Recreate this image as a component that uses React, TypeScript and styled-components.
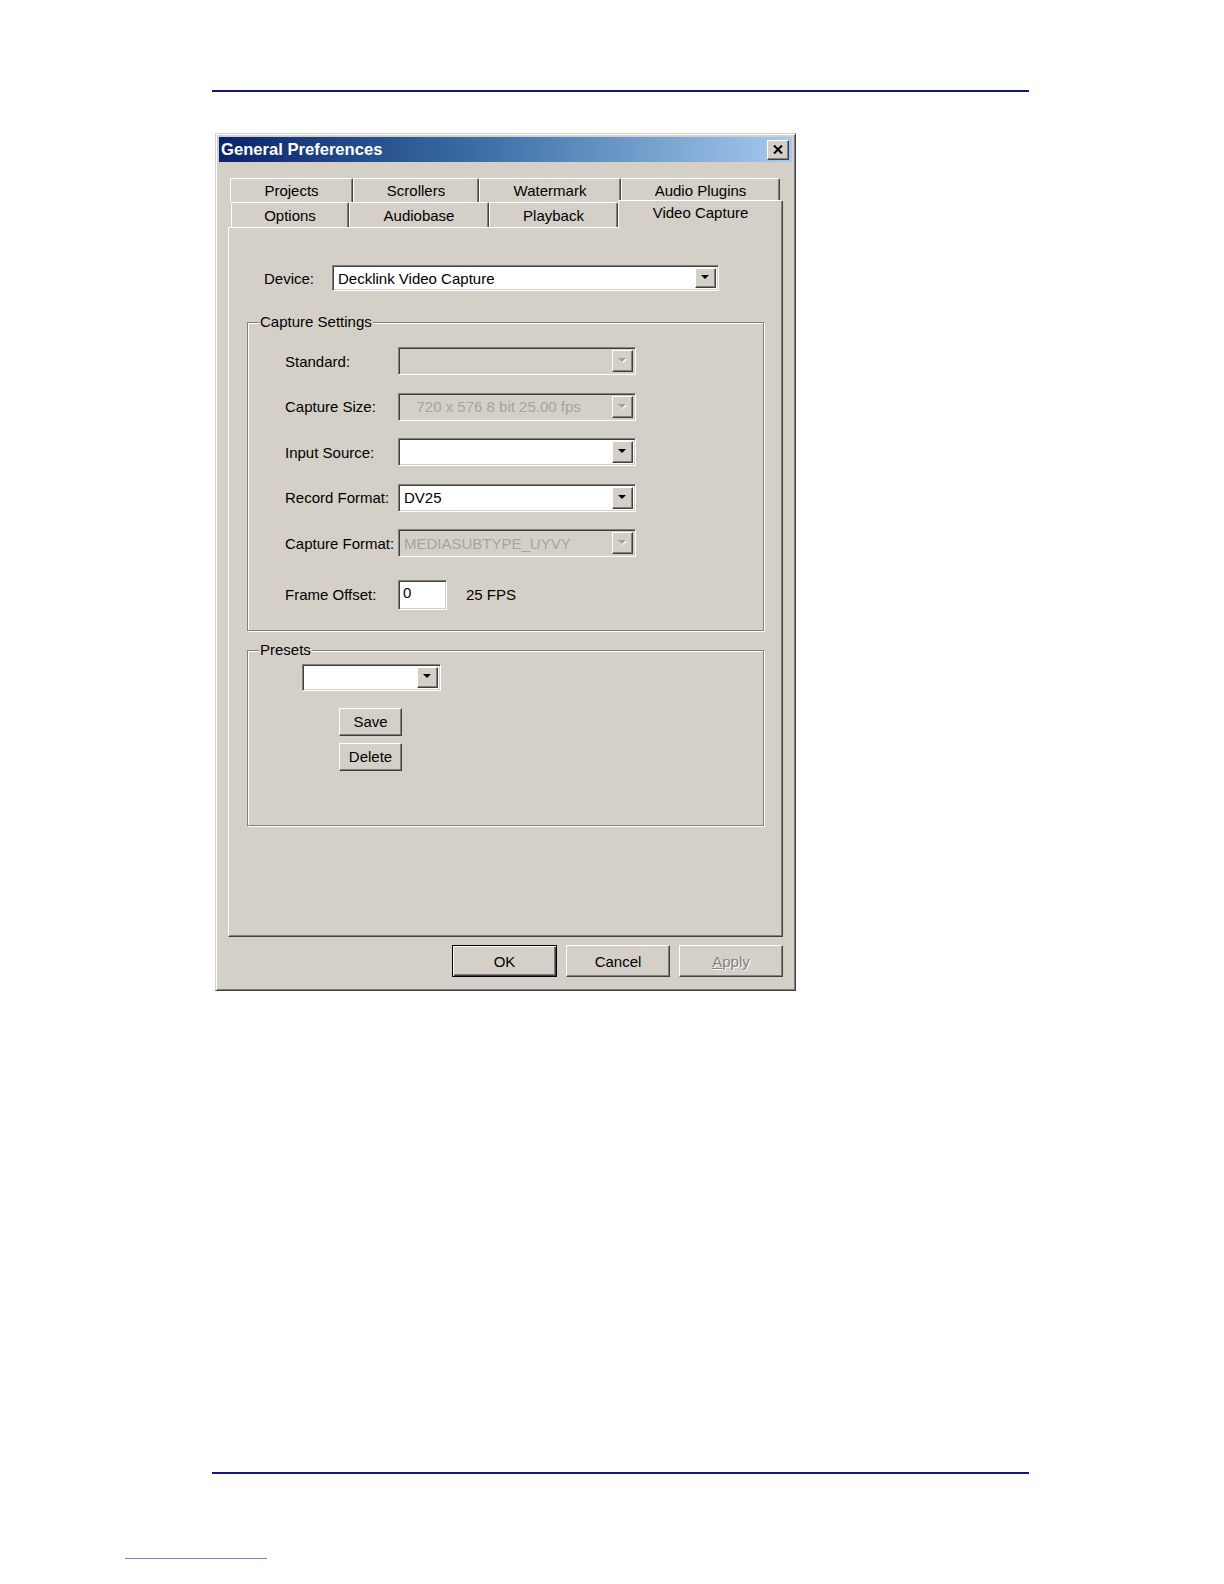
import React from "react";
import styled, { createGlobalStyle, css } from "styled-components";

const Global = createGlobalStyle`
  html, body {
    margin: 0;
    padding: 0;
    background: #fff;
  }
  html {
    overflow: hidden;
  }
  body {
    font-family: "Liberation Sans", Arial, sans-serif;
    font-size: 15px;
    color: #000;
  }
`;

const face = "#d4d0c8";
const shadow = "#808080";
const darkShadow = "#404040";

const raised = css`
  border: 1px solid;
  border-color: #fff ${darkShadow} ${darkShadow} #fff;
  box-shadow: inset -1px -1px 0 ${shadow}, inset 1px 1px 0 ${face};
`;

const sunken = css`
  border: 1px solid;
  border-color: ${shadow} #fff #fff ${shadow};
  box-shadow: inset 1px 1px 0 ${darkShadow}, inset -1px -1px 0 ${face};
`;

const Page = styled.div`
  padding-top: 90px;
`;

const Rule = styled.div<{ $gap: number }>`
  margin: ${(p) => p.$gap}px 0 0 212px;
  width: 817px;
  height: 2px;
  background: #14148c;
`;

const ShortRule = styled.div`
  margin: 84px 0 0 125px;
  width: 142px;
  height: 1px;
  background: #7c7cbc;
`;

const Dialog = styled.div`
  margin: 41px 0 0 215px;
  width: 581px;
  height: 858px;
  box-sizing: border-box;
  padding: 3px;
  background: ${face};
  border: 1px solid;
  border-color: ${face} ${darkShadow} ${darkShadow} ${face};
  box-shadow: inset 1px 1px 0 #fff, inset -1px -1px 0 ${shadow};
  display: flex;
  flex-direction: column;
`;

const TitleBar = styled.div`
  height: 25px;
  display: flex;
  align-items: center;
  justify-content: space-between;
  padding: 0 3px 0 2px;
  background: linear-gradient(to right, #0a246a 0%, #3a6ea5 45%, #a6caf0 100%);
`;

const Title = styled.span`
  color: #fff;
  font-weight: bold;
  font-size: 16.6px;
`;

const CloseBtn = styled.div`
  ${raised};
  box-sizing: border-box;
  width: 22px;
  height: 20px;
  background: ${face};
  display: flex;
  align-items: center;
  justify-content: center;
`;

const Body = styled.div`
  flex: 1;
  display: flex;
  flex-direction: column;
  padding: 0 9px 10px;
`;

const TabRow = styled.div<{ $indent: number; $h: number; $top?: number }>`
  display: flex;
  align-items: flex-end;
  height: ${(p) => p.$h}px;
  margin: ${(p) => p.$top ?? 0}px 0 0 ${(p) => p.$indent}px;
`;

const Tab = styled.div<{ $w: number; $active?: boolean }>`
  box-sizing: border-box;
  width: ${(p) => p.$w}px;
  height: 100%;
  display: flex;
  align-items: center;
  justify-content: center;
  background: ${face};
  border-top: 1px solid #fff;
  border-left: 1px solid #fff;
  border-right: 1px solid ${darkShadow};
  border-radius: 2px 2px 0 0;
  box-shadow: inset -1px 0 0 ${shadow};
  ${(p) =>
    p.$active &&
    css`
      position: relative;
      z-index: 1;
      height: 28px;
      margin-bottom: -1px;
      padding-bottom: 5px;
    `}
`;

const Panel = styled.div`
  box-sizing: border-box;
  height: 710px;
  padding: 37px 18px 0;
  border: 1px solid;
  border-color: #fff ${darkShadow} ${darkShadow} #fff;
  box-shadow: inset -1px -1px 0 ${shadow};
  display: flex;
  flex-direction: column;
`;

const DeviceRow = styled.div`
  display: flex;
  align-items: center;
  height: 26px;
  margin-left: 17px;
`;

const Label = styled.span<{ $w: number }>`
  width: ${(p) => p.$w}px;
  flex-shrink: 0;
  white-space: nowrap;
`;

const Combo = styled.div<{ $w: number; $h: number; $disabled?: boolean }>`
  ${sunken};
  box-sizing: border-box;
  width: ${(p) => p.$w}px;
  height: ${(p) => p.$h}px;
  padding: 2px;
  display: flex;
  background: ${(p) => (p.$disabled ? face : "#fff")};
  color: ${(p) => (p.$disabled ? "#a4a4a4" : "#000")};
`;

const ComboValue = styled.span`
  flex: 1;
  display: flex;
  align-items: center;
  padding-left: 3px;
  white-space: pre;
  overflow: hidden;
`;

const DropBtn = styled.div`
  ${raised};
  box-sizing: border-box;
  width: 21px;
  background: ${face};
  display: flex;
  align-items: center;
  justify-content: center;
`;

const Group = styled.div<{ $gap: number; $pb: number }>`
  margin-top: ${(p) => p.$gap}px;
  padding-bottom: ${(p) => p.$pb}px;
  border: 1px solid ${shadow};
  box-shadow: inset 1px 1px 0 #fff, 1px 1px 0 #fff;
`;

const Legend = styled.div`
  width: fit-content;
  margin: -10px 0 0 11px;
  padding: 0 1px;
  height: 18px;
  line-height: 18px;
  background: ${face};
`;

const SettingsList = styled.div`
  margin: 16px 0 0 37px;
  display: flex;
  flex-direction: column;
  gap: 17.5px;
`;

const SettingRow = styled.div<{ $extra?: number }>`
  display: flex;
  align-items: center;
  margin-top: ${(p) => p.$extra ?? 0}px;
`;

const EditBox = styled.div`
  ${sunken};
  box-sizing: border-box;
  width: 49px;
  height: 30px;
  padding: 2px 4px;
  background: #fff;
  display: flex;
  align-items: flex-start;
  line-height: 20px;
`;

const Note = styled.span`
  margin-left: 19px;
`;

const PresetCombo = styled.div`
  margin: 5px 0 0 54px;
`;

const PresetButtons = styled.div`
  margin: 17px 0 0 91px;
  display: flex;
  flex-direction: column;
  gap: 7px;
`;

const PushButton = styled.div<{ $w: number; $h: number; $default?: boolean; $disabled?: boolean }>`
  ${raised};
  box-sizing: border-box;
  width: ${(p) => p.$w}px;
  height: ${(p) => p.$h}px;
  background: ${face};
  display: flex;
  align-items: center;
  justify-content: center;
  ${(p) =>
    p.$default &&
    css`
      border: 1px solid #000;
      box-shadow: inset 1px 1px 0 #fff, inset -1px -1px 0 ${darkShadow},
        inset -2px -2px 0 ${shadow};
    `}
  ${(p) =>
    p.$disabled &&
    css`
      color: ${shadow};
      text-shadow: 1px 1px 0 #fff;
    `}
`;

const Footer = styled.div`
  margin-top: 8px;
  display: flex;
  justify-content: flex-end;
  gap: 9px;
`;

const Arrow = ({ disabled }: { disabled?: boolean }) => (
  <svg width="9" height="6" viewBox="0 0 9 6">
    {disabled && <polygon points="1,1 9,1 5,5" fill="#fff" />}
    <polygon points="0,0 8,0 4,4" fill={disabled ? "#a0a0a0" : "#000"} />
  </svg>
);

const ComboBox = ({
  w,
  h,
  value = "",
  disabled,
}: {
  w: number;
  h: number;
  value?: string;
  disabled?: boolean;
}) => (
  <Combo $w={w} $h={h} $disabled={disabled}>
    <ComboValue>{value}</ComboValue>
    <DropBtn>
      <Arrow disabled={disabled} />
    </DropBtn>
  </Combo>
);

const backTabs = [
  { label: "Projects", w: 123 },
  { label: "Scrollers", w: 126 },
  { label: "Watermark", w: 142 },
  { label: "Audio Plugins", w: 159 },
];

const frontTabs = [
  { label: "Options", w: 118 },
  { label: "Audiobase", w: 140 },
  { label: "Playback", w: 129 },
  { label: "Video Capture", w: 165, active: true },
];

const settings = [
  { label: "Standard:", value: "", disabled: true },
  { label: "Capture Size:", value: "   720 x 576 8 bit 25.00 fps", disabled: true },
  { label: "Input Source:", value: "" },
  { label: "Record Format:", value: "DV25" },
  { label: "Capture Format:", value: "MEDIASUBTYPE_UYVY", disabled: true },
];

export default function App() {
  return (
    <>
      <Global />
      <Page>
        <Rule $gap={0} />
        <Dialog>
          <TitleBar>
            <Title>General Preferences</Title>
            <CloseBtn>
              <svg width="10" height="9" viewBox="0 0 10 9">
                <path d="M1 0.5 L9 8.5 M9 0.5 L1 8.5" stroke="#000" strokeWidth="2" />
              </svg>
            </CloseBtn>
          </TitleBar>
          <Body>
            <TabRow $indent={2} $h={24} $top={16}>
              {backTabs.map((t) => (
                <Tab key={t.label} $w={t.w}>
                  {t.label}
                </Tab>
              ))}
            </TabRow>
            <TabRow $indent={3} $h={25}>
              {frontTabs.map((t) => (
                <Tab key={t.label} $w={t.w} $active={t.active}>
                  {t.label}
                </Tab>
              ))}
            </TabRow>
            <Panel>
              <DeviceRow>
                <Label $w={68}>Device:</Label>
                <ComboBox w={387} h={26} value="Decklink Video Capture" />
              </DeviceRow>

              <Group $gap={31} $pb={20}>
                <Legend>Capture Settings</Legend>
                <SettingsList>
                  {settings.map((s) => (
                    <SettingRow key={s.label}>
                      <Label $w={113}>{s.label}</Label>
                      <ComboBox w={238} h={28} value={s.value} disabled={s.disabled} />
                    </SettingRow>
                  ))}
                  <SettingRow $extra={5}>
                    <Label $w={113}>Frame Offset:</Label>
                    <EditBox>0</EditBox>
                    <Note>25 FPS</Note>
                  </SettingRow>
                </SettingsList>
              </Group>

              <Group $gap={19} $pb={54}>
                <Legend>Presets</Legend>
                <PresetCombo>
                  <ComboBox w={139} h={27} />
                </PresetCombo>
                <PresetButtons>
                  <PushButton $w={63} $h={28}>Save</PushButton>
                  <PushButton $w={63} $h={28}>Delete</PushButton>
                </PresetButtons>
              </Group>
            </Panel>
            <Footer>
              <PushButton $w={105} $h={32} $default>
                OK
              </PushButton>
              <PushButton $w={104} $h={32}>
                Cancel
              </PushButton>
              <PushButton $w={104} $h={32} $disabled>
                <span>
                  <u>A</u>pply
                </span>
              </PushButton>
            </Footer>
          </Body>
        </Dialog>
        <Rule $gap={481} />
        <ShortRule />
      </Page>
    </>
  );
}
